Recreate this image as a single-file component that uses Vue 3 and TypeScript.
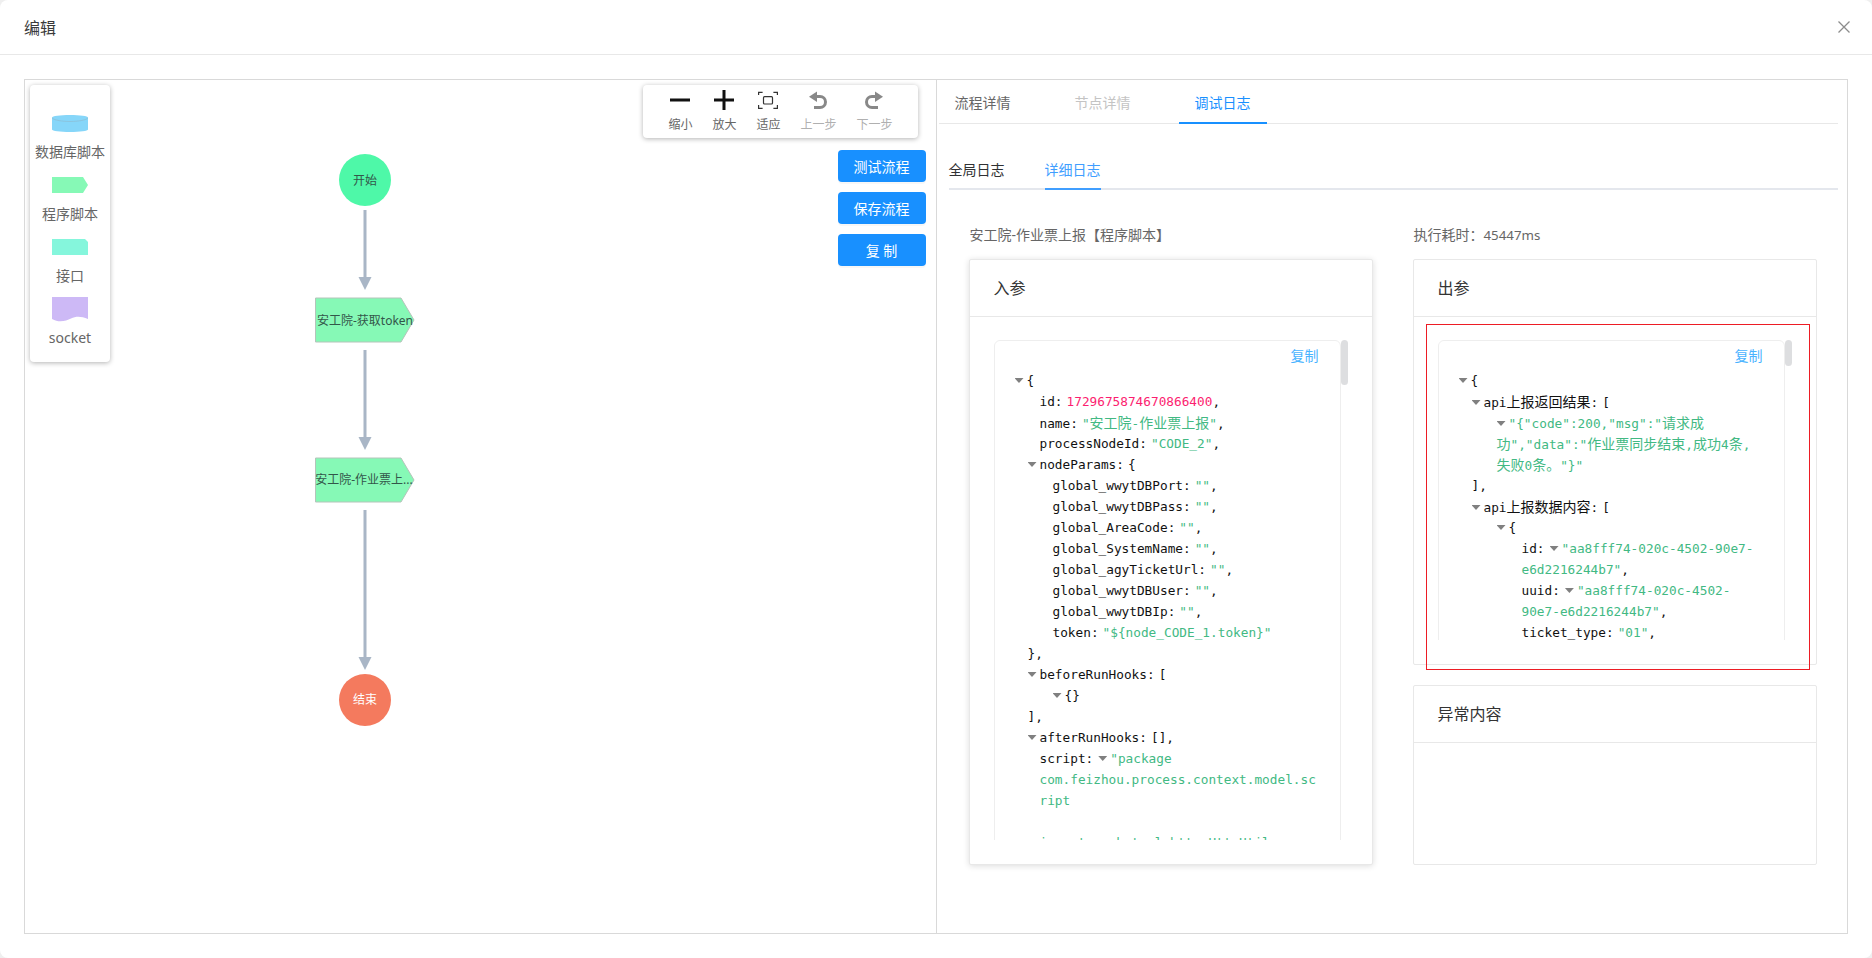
<script setup lang="ts">
type Seg = { k: 'key' | 'num' | 'str' | 'txt' | 'tri' | 'tri-in'; t?: string }
type Row = { x: number; segs: Seg[] }

const key = (t: string): Seg => ({ k: 'key', t })
const str = (t: string): Seg => ({ k: 'str', t })
const txt = (t: string): Seg => ({ k: 'txt', t })
const tri: Seg = { k: 'tri' }
const triIn: Seg = { k: 'tri-in' }

const emptyKeys = [
  'global_wwytDBPort',
  'global_wwytDBPass',
  'global_AreaCode',
  'global_SystemName',
  'global_agyTicketUrl',
  'global_wwytDBUser',
  'global_wwytDBIp',
]

const inputRows: Row[] = [
  { x: 20, segs: [tri, txt('{')] },
  { x: 45, segs: [key('id:'), { k: 'num', t: '1729675874670866400' }, txt(',')] },
  { x: 45, segs: [key('name:'), str('"安工院-作业票上报"'), txt(',')] },
  { x: 45, segs: [key('processNodeId:'), str('"CODE_2"'), txt(',')] },
  { x: 33, segs: [tri, key('nodeParams:'), txt('{')] },
  ...emptyKeys.map((name) => ({ x: 58, segs: [key(name + ':'), str('""'), txt(',')] })),
  { x: 58, segs: [key('token:'), str('"${node_CODE_1.token}"')] },
  { x: 33, segs: [txt('},')] },
  { x: 33, segs: [tri, key('beforeRunHooks:'), txt('[')] },
  { x: 58, segs: [tri, txt('{}')] },
  { x: 33, segs: [txt('],')] },
  { x: 33, segs: [tri, key('afterRunHooks:'), txt('[],')] },
  { x: 45, segs: [key('script:'), triIn, str('"package')] },
  { x: 45, segs: [str('com.feizhou.process.context.model.sc')] },
  { x: 45, segs: [str('ript')] },
  { x: 45, segs: [str(' ')] },
  { x: 45, segs: [str('import cn.hutool.http.HttpUtil;')] },
]

const outputRows: Row[] = [
  { x: 20, segs: [tri, txt('{')] },
  { x: 33, segs: [tri, key('api上报返回结果:'), txt('[')] },
  { x: 58, segs: [tri, str('"{"code":200,"msg":"请求成')] },
  { x: 58, segs: [str('功","data":"作业票同步结束,成功4条,')] },
  { x: 58, segs: [str('失败0条。"}"')] },
  { x: 33, segs: [txt('],')] },
  { x: 33, segs: [tri, key('api上报数据内容:'), txt('[')] },
  { x: 58, segs: [tri, txt('{')] },
  { x: 83, segs: [key('id:'), triIn, str('"aa8fff74-020c-4502-90e7-')] },
  { x: 83, segs: [str('e6d2216244b7"'), txt(',')] },
  { x: 83, segs: [key('uuid:'), triIn, str('"aa8fff74-020c-4502-')] },
  { x: 83, segs: [str('90e7-e6d2216244b7"'), txt(',')] },
  { x: 83, segs: [key('ticket_type:'), str('"01"'), txt(',')] },
]

// the mono font is narrower than the CJK glyphs should be, so CJK runs get their own size
function runs(text: string) {
  return (text.match(/[\u3000-\u9fff\uff00-\uffef]+|[^\u3000-\u9fff\uff00-\uffef]+/g) ?? []).map((t) => ({
    t,
    cjk: /[\u3000-\u9fff\uff00-\uffef]/.test(t),
  }))
}

const panels = [
  { title: '入参', rows: inputRows },
  { title: '出参', rows: outputRows },
]
</script>

<template>
  <div class="modal">
    <header class="modal-head">
      <span class="modal-title">编辑</span>
      <svg class="close" width="12" height="12" viewBox="0 0 12 12">
        <path d="M0.5 0.5 11.5 11.5M11.5 0.5 0.5 11.5" stroke="#8c8c8c" stroke-width="1.3" fill="none" />
      </svg>
    </header>

    <div class="frame">
      <section class="canvas">
        <svg class="graph" width="911" height="853">
          <g fill="#a9b6c6" stroke="none">
            <rect x="338.5" y="130" width="3" height="68" />
            <path d="M333.5 197H346.5L340 210Z" />
            <rect x="338.5" y="270" width="3" height="88" />
            <path d="M333.5 357H346.5L340 370Z" />
            <rect x="338.5" y="430" width="3" height="148" />
            <path d="M333.5 577H346.5L340 590Z" />
          </g>
          <circle cx="340" cy="100" r="26" fill="#4ef8a8" />
          <text x="340" y="104.5" class="node-text">开始</text>
          <path d="M290.5 218H376L389 240 376 262H290.5Z" fill="#86f9b6" stroke="#b4c4ba" stroke-width="1" />
          <text x="340" y="244.5" class="node-text">安工院-获取token</text>
          <path d="M290.5 378H376L389 400 376 422H290.5Z" fill="#86f9b6" stroke="#b4c4ba" stroke-width="1" />
          <text x="339" y="404" class="node-text">安工院-作业票上...</text>
          <circle cx="340" cy="620" r="26" fill="#f47a5e" />
          <text x="340" y="624" class="node-text light">结束</text>
        </svg>

        <aside class="palette">
          <div class="palette-item">
            <svg class="shape" width="36" height="17" viewBox="0 0 36 17">
              <path d="M0 2.5C0 1 8 0 18 0S36 1 36 2.5V14.5C36 16 28 17 18 17S0 16 0 14.5Z" fill="#86d6f9" />
              <path d="M0 2.5C0 4.5 8 6.5 18 6.5S36 4.5 36 2.5" fill="none" stroke="#8fb8cc" stroke-width="0.6" />
            </svg>
            <span>数据库脚本</span>
          </div>
          <div class="palette-item">
            <svg class="shape" width="36" height="17" viewBox="0 0 36 17">
              <path d="M0 0H31L36 8 31 16H0Z" fill="#86f9b6" />
            </svg>
            <span>程序脚本</span>
          </div>
          <div class="palette-item">
            <svg class="shape" width="36" height="17" viewBox="0 0 36 17">
              <path d="M0 0H33L36 3V16H0Z" fill="#85f6dc" />
            </svg>
            <span>接口</span>
          </div>
          <div class="palette-item tall">
            <svg class="shape" width="36" height="25" viewBox="0 0 36 25">
              <path d="M0 0H36V22C29 19 24 19 19 21.5S7 26 0 22Z" fill="#cdb9f6" />
            </svg>
            <span>socket</span>
          </div>
        </aside>

        <div class="toolbar">
          <div class="tool">
            <svg width="20" height="20" viewBox="0 0 20 20"><rect y="8.5" width="20" height="3" fill="#111" /></svg>
            <span>缩小</span>
          </div>
          <div class="tool">
            <svg width="20" height="20" viewBox="0 0 20 20"><path d="M0 8.5H8.5V0H11.5V8.5H20V11.5H11.5V20H8.5V11.5H0Z" fill="#111" /></svg>
            <span>放大</span>
          </div>
          <div class="tool">
            <svg width="20" height="20" viewBox="0 0 20 20">
              <path d="M0.6 5V2.4H4.6M15.4 2.4H19.4V5M19.4 15V18.4H15.4M4.6 18.4H0.6V15" fill="none" stroke="#333" stroke-width="1.2" />
              <rect x="5.5" y="6.7" width="9" height="7.3" rx="1" fill="none" stroke="#333" stroke-width="1.2" />
            </svg>
            <span>适应</span>
          </div>
          <div class="tool off">
            <svg width="20" height="20" viewBox="0 0 20 20">
              <path d="M9 1.5 1 6.8 9 12Z" fill="#888" />
              <path d="M8 6.5H12A5.5 5.5 0 0 1 12 17.5H6" fill="none" stroke="#888" stroke-width="3" />
            </svg>
            <span>上一步</span>
          </div>
          <div class="tool off">
            <svg width="20" height="20" viewBox="0 0 20 20">
              <path d="M11 1.5 19 6.8 11 12Z" fill="#888" />
              <path d="M12 6.5H8A5.5 5.5 0 0 0 8 17.5H14" fill="none" stroke="#888" stroke-width="3" />
            </svg>
            <span>下一步</span>
          </div>
        </div>

        <div class="actions">
          <button type="button">测试流程</button>
          <button type="button">保存流程</button>
          <button type="button">复 制</button>
        </div>
      </section>

      <section class="detail">
        <nav class="tabs">
          <span class="tab">流程详情</span>
          <span class="tab disabled">节点详情</span>
          <span class="tab active">调试日志</span>
        </nav>

        <nav class="subtabs">
          <span class="subtab">全局日志</span>
          <span class="subtab active">详细日志</span>
        </nav>

        <div class="columns">
          <div class="column">
            <p class="caption">安工院-作业票上报【程序脚本】</p>
            <div class="card raised full">
              <div class="card-head">{{ panels[0].title }}</div>
              <div class="card-body">
                <div class="scroll">
                  <div class="json">
                    <div class="copy">复制</div>
                    <div v-for="(row, i) in panels[0].rows" :key="i" class="row" :style="{ paddingLeft: row.x + 'px' }">
                      <template v-for="(seg, j) in row.segs" :key="j">
                        <i v-if="seg.k === 'tri' || seg.k === 'tri-in'" :class="seg.k" />
                        <span v-else :class="seg.k">
                          <span v-for="(run, n) in runs(seg.t ?? '')" :key="n" :class="{ cjk: run.cjk }">{{ run.t }}</span>
                        </span>
                      </template>
                    </div>
                  </div>
                  <div class="thumb" />
                </div>
              </div>
            </div>
          </div>

          <div class="column">
            <p class="caption">执行耗时：<span class="ms">45447ms</span></p>
            <div class="card out">
              <div class="card-head">{{ panels[1].title }}</div>
              <div class="card-body">
                <div class="scroll">
                  <div class="json">
                    <div class="copy">复制</div>
                    <div v-for="(row, i) in panels[1].rows" :key="i" class="row" :style="{ paddingLeft: row.x + 'px' }">
                      <template v-for="(seg, j) in row.segs" :key="j">
                        <i v-if="seg.k === 'tri' || seg.k === 'tri-in'" :class="seg.k" />
                        <span v-else :class="seg.k">
                          <span v-for="(run, n) in runs(seg.t ?? '')" :key="n" :class="{ cjk: run.cjk }">{{ run.t }}</span>
                        </span>
                      </template>
                    </div>
                  </div>
                  <div class="thumb short" />
                </div>
              </div>
              <div class="highlight" />
            </div>
            <div class="card err">
              <div class="card-head">异常内容</div>
            </div>
          </div>
        </div>
      </section>
    </div>
  </div>
</template>

<style>
html,
body {
  margin: 0;
  background: #efefef;
}
</style>

<style scoped>
.modal {
  width: 1872px;
  height: 958px;
  box-sizing: border-box;
  overflow: hidden;
  background: #fff;
  border-radius: 8px;
  font-family: 'Noto Sans', 'Noto Sans CJK SC', sans-serif;
  font-size: 14px;
  color: #333;
}

.modal-head {
  display: flex;
  align-items: center;
  justify-content: space-between;
  height: 54px;
  padding: 0 22px 0 24px;
  border-bottom: 1px solid #e8e8e8;
}

.modal-title {
  font-size: 16px;
  color: #3a3a3a;
}

.frame {
  display: flex;
  height: 855px;
  box-sizing: border-box;
  margin: 24px 24px 0;
  border: 1px solid #d9d9d9;
}

.canvas {
  position: relative;
  flex: 1;
  min-width: 0;
}

.graph {
  position: absolute;
  left: 0;
  top: 0;
}

.node-text {
  font-size: 12px;
  text-anchor: middle;
  fill: #33564a;
}

.node-text.light {
  fill: #fff;
}

.palette {
  position: absolute;
  left: 5px;
  top: 5px;
  width: 80px;
  box-sizing: border-box;
  display: flex;
  flex-direction: column;
  align-items: center;
  gap: 15px;
  height: 277px;
  padding-top: 30px;
  background: #fff;
  border-radius: 4px;
  box-shadow: 0 1px 5px rgba(0, 0, 0, 0.3);
}

.palette-item {
  display: flex;
  flex-direction: column;
  align-items: center;
  line-height: 20px;
  font-size: 14px;
  color: #666;
}

.palette-item .shape {
  display: block;
  margin-bottom: 10px;
}

.palette-item.tall {
  margin-top: -4px;
}

.palette-item.tall .shape {
  margin-bottom: 6px;
}

.toolbar {
  position: absolute;
  right: 18px;
  top: 5px;
  display: flex;
  gap: 20px;
  height: 53px;
  box-sizing: border-box;
  padding: 5px 25px 0;
  background: #fff;
  border-radius: 4px;
  box-shadow: 0 1px 5px rgba(0, 0, 0, 0.3);
}

.tool {
  display: flex;
  flex-direction: column;
  align-items: center;
  font-size: 12px;
  line-height: 18px;
  color: #666;
}

.tool svg {
  display: block;
  margin-bottom: 6px;
}

.tool.off {
  color: #b0b0b0;
}

.actions {
  position: absolute;
  right: 10px;
  top: 70px;
  display: flex;
  flex-direction: column;
  gap: 10px;
}

.actions button {
  width: 88px;
  height: 32px;
  padding: 0;
  border: none;
  border-radius: 4px;
  background: #1890ff;
  color: #fff;
  font-family: inherit;
  font-size: 14px;
  box-shadow: 0 2px 0 rgba(0, 0, 0, 0.03);
}

.detail {
  flex: 1;
  min-width: 0;
  border-left: 1px solid #d9d9d9;
}

.tabs {
  display: flex;
  gap: 32px;
  height: 44px;
  box-sizing: border-box;
  margin: 0 9px 0 2px;
  border-bottom: 1px solid #e8e8e8;
}

.tab {
  padding: 0 16px;
  line-height: 45px;
  height: 44px;
  box-sizing: border-box;
  color: #666;
}

.tab.disabled {
  color: #c4c4c4;
}

.tab.active {
  color: #1890ff;
  border-bottom: 2px solid #1890ff;
}

.subtabs {
  display: flex;
  gap: 40px;
  height: 40px;
  box-sizing: border-box;
  margin: 26px 9px 0 12px;
  border-bottom: 2px solid #e4e7ed;
}

.subtab {
  height: 40px;
  box-sizing: border-box;
  line-height: 40px;
  color: #303133;
}

.subtab.active {
  color: #409eff;
  border-bottom: 2px solid #409eff;
}

.columns {
  display: grid;
  grid-template-columns: 404px 404px;
  gap: 40px;
  margin: 35px 0 0 32px;
}

.column {
  display: flex;
  flex-direction: column;
  gap: 20px;
}

.caption {
  margin: 0 0 -6px;
  padding-left: 1px;
  line-height: 20px;
  color: #666;
}

.ms {
  font-size: 13.3px;
}

.card {
  position: relative;
  display: flex;
  flex-direction: column;
  box-sizing: border-box;
  background: #fff;
  border: 1px solid #e8e8e8;
  border-radius: 2px;
}

.card.full {
  height: 606px;
}

.card.raised {
  box-shadow: 0 1px 6px rgba(0, 0, 0, 0.14);
}

.card.out {
  height: 406px;
}

.card.err {
  height: 180px;
}

.card-head {
  height: 57px;
  box-sizing: border-box;
  flex: none;
  padding: 0 24px;
  border-bottom: 1px solid #e8e8e8;
  font-size: 16px;
  line-height: 56px;
  color: #333;
}

.card-body {
  flex: 1;
  min-height: 0;
  padding: 23px 24px 24px;
}

.scroll {
  position: relative;
  height: 100%;
  overflow: hidden;
}

.json {
  width: 347px;
  height: 900px;
  box-sizing: border-box;
  border: 1px solid #eee;
  border-radius: 6px;
  font-family: 'DejaVu Sans Mono', monospace;
  font-size: 12.75px;
  color: #111;
}

.copy {
  height: 29px;
  padding-right: 21px;
  text-align: right;
  font-family: 'Noto Sans CJK SC', sans-serif;
  font-size: 14px;
  line-height: 29px;
  color: #49b3ff;
}

.row {
  height: 21px;
  line-height: 21px;
  white-space: pre;
}

.cjk {
  font-family: 'Noto Sans CJK SC', sans-serif;
  font-size: 14px;
}

.key {
  margin-right: 4px;
}

.str {
  color: #42b983;
}

.num {
  color: #fc1e70;
}

.tri,
.tri-in {
  display: inline-block;
  width: 9px;
  height: 5px;
  margin-right: 3px;
  background: #808080;
  clip-path: polygon(0 0, 100% 0, 50% 100%);
  vertical-align: 2px;
}

.tri-in {
  margin-left: 1px;
}

.thumb {
  position: absolute;
  left: 347px;
  top: 0;
  width: 7px;
  height: 45px;
  border-radius: 4px;
  background: #dddee0;
}

.thumb.short {
  height: 26px;
}

.highlight {
  position: absolute;
  left: 12px;
  top: 64px;
  width: 384px;
  height: 346px;
  box-sizing: border-box;
  border: 1px solid #ed1c24;
}
</style>
